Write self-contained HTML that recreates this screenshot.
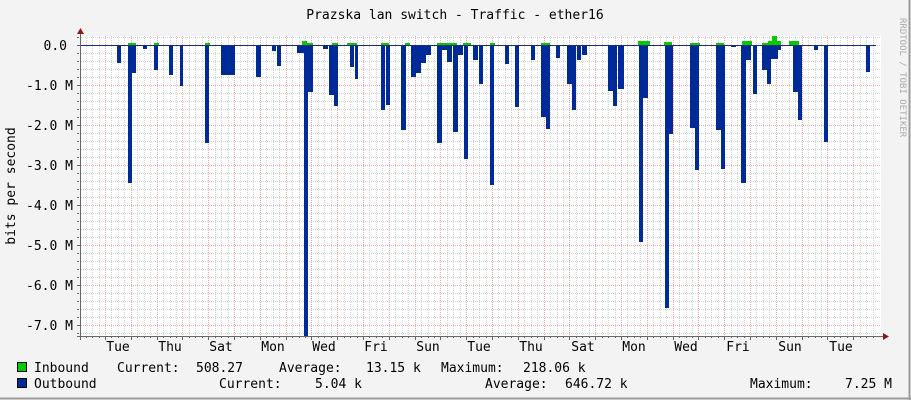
<!DOCTYPE html>
<html><head><meta charset="utf-8"><style>
html,body{margin:0;padding:0;background:#f3f3f3;}
body{width:911px;height:400px;overflow:hidden;position:relative;font-family:"DejaVu Sans Mono","Liberation Mono",monospace;}
text{white-space:pre;}
</style></head><body>
<svg id="s" width="911" height="400" xmlns="http://www.w3.org/2000/svg" style="position:absolute;left:0;top:0" font-family="DejaVu Sans Mono, Liberation Mono, monospace">
<rect x="0" y="0" width="911" height="400" fill="#f3f3f3"/>
<line x1="909.5" y1="0" x2="909.5" y2="400" stroke="#9c9c9c" stroke-width="2"/>
<line x1="0" y1="398.5" x2="911" y2="398.5" stroke="#9c9c9c" stroke-width="2"/>
<rect x="81" y="36" width="800" height="300" fill="#fff"/>
<g id="grid"></g>
<g fill="#00cc00">
<rect x="128" y="43" width="8" height="2"/><rect x="154" y="43" width="5" height="2"/><rect x="205" y="43" width="5" height="2"/>
<rect x="302" y="41" width="5" height="4"/><rect x="307" y="43" width="6" height="2"/><rect x="332" y="43" width="6" height="2"/><rect x="347" y="43" width="10" height="2"/>
<rect x="381" y="43" width="8" height="2"/><rect x="405" y="43" width="5" height="2"/><rect x="437" y="43" width="20" height="2"/><rect x="463" y="43" width="8" height="2"/><rect x="490" y="43" width="5" height="2"/>
<rect x="541" y="43" width="9" height="2"/><rect x="638" y="41" width="12" height="4"/><rect x="664" y="42" width="8" height="3"/><rect x="690" y="43" width="10" height="2"/><rect x="716" y="43" width="8" height="2"/>
<rect x="742" y="41" width="10" height="4"/><rect x="762" y="43" width="8" height="2"/><rect x="772" y="36" width="5" height="9"/><rect x="768" y="41" width="13" height="4"/><rect x="789" y="41" width="10" height="4"/>
</g>
<g fill="#002a97">
<rect x="117" y="45" width="4" height="18"/><rect x="128" y="45" width="4" height="138"/><rect x="132" y="45" width="4" height="28"/><rect x="143" y="45" width="4" height="4"/><rect x="154" y="45" width="4" height="25"/><rect x="169" y="45" width="4" height="30"/><rect x="180" y="45" width="3" height="41"/>
<rect x="205" y="45" width="4" height="98"/><rect x="221" y="45" width="14" height="30"/><rect x="225" y="45" width="5" height="28"/><rect x="256" y="45" width="5" height="32"/><rect x="272" y="45" width="4" height="6"/><rect x="277" y="45" width="4" height="21"/>
<rect x="297" y="45" width="7" height="8"/><rect x="304" y="45" width="4" height="291"/><rect x="308" y="45" width="5" height="47"/><rect x="323" y="45" width="5" height="4"/><rect x="329" y="45" width="5" height="50"/><rect x="334" y="45" width="4" height="61"/>
<rect x="350" y="45" width="4" height="22"/><rect x="355" y="45" width="3" height="34"/><rect x="381" y="45" width="4" height="65"/><rect x="386" y="45" width="4" height="60"/><rect x="401" y="45" width="5" height="85"/><rect x="411" y="45" width="5" height="32"/><rect x="416" y="45" width="5" height="28"/><rect x="421" y="45" width="5" height="18"/><rect x="426" y="45" width="5" height="10"/>
<rect x="437" y="45" width="5" height="98"/><rect x="442" y="45" width="5" height="5"/><rect x="447" y="45" width="5" height="17"/><rect x="453" y="45" width="5" height="87"/><rect x="458" y="45" width="5" height="10"/><rect x="464" y="45" width="4" height="114"/><rect x="473" y="45" width="5" height="15"/><rect x="479" y="45" width="4" height="39"/><rect x="490" y="45" width="4" height="140"/>
<rect x="505" y="45" width="4" height="19"/><rect x="515" y="45" width="4" height="62"/><rect x="531" y="45" width="4" height="15"/><rect x="541" y="45" width="5" height="72"/><rect x="546" y="45" width="4" height="84"/><rect x="556" y="45" width="4" height="13"/><rect x="567" y="45" width="5" height="39"/><rect x="572" y="45" width="4" height="65"/><rect x="577" y="45" width="4" height="15"/><rect x="582" y="45" width="5" height="10"/>
<rect x="608" y="45" width="5" height="46"/><rect x="613" y="45" width="4" height="61"/><rect x="618" y="45" width="6" height="44"/><rect x="639" y="45" width="4" height="197"/><rect x="643" y="45" width="5" height="53"/><rect x="665" y="45" width="4" height="263"/><rect x="669" y="45" width="4" height="89"/>
<rect x="690" y="45" width="5" height="83"/><rect x="695" y="45" width="4" height="125"/><rect x="716" y="45" width="5" height="85"/><rect x="721" y="45" width="4" height="124"/><rect x="731" y="45" width="5" height="2"/><rect x="741" y="45" width="5" height="138"/><rect x="746" y="45" width="5" height="15"/><rect x="753" y="45" width="4" height="49"/>
<rect x="762" y="45" width="5" height="25"/><rect x="767" y="45" width="4" height="39"/><rect x="771" y="45" width="7" height="14"/><rect x="778" y="45" width="3" height="5"/><rect x="793" y="45" width="5" height="47"/><rect x="798" y="45" width="4" height="75"/><rect x="814" y="45" width="4" height="5"/><rect x="824" y="45" width="4" height="97"/><rect x="866" y="45" width="4" height="27"/>
</g>
<line x1="81" y1="45.5" x2="876" y2="45.5" stroke="#1a2a80"/>
<line x1="80.5" y1="34" x2="80.5" y2="340" stroke="#666"/>
<line x1="77" y1="336.5" x2="883" y2="336.5" stroke="#666"/>
<polygon points="77,34 84,34 80.5,28" fill="#8b1a1a"/>
<polygon points="883,333 883,340 889,336.5" fill="#8b1a1a"/>
<g font-size="13" fill="#000" text-anchor="end">
<text x="67" y="50">0.0</text><text x="73" y="90">-1.0 M</text><text x="73" y="130">-2.0 M</text><text x="73" y="170">-3.0 M</text><text x="73" y="210">-4.0 M</text><text x="73" y="250">-5.0 M</text><text x="73" y="290">-6.0 M</text><text x="73" y="330">-7.0 M</text>
</g>
<g font-size="13" fill="#000" text-anchor="middle">
<text x="118" y="351">Tue</text><text x="170" y="351">Thu</text><text x="221" y="351">Sat</text><text x="273" y="351">Mon</text><text x="324" y="351">Wed</text><text x="376" y="351">Fri</text><text x="428" y="351">Sun</text><text x="479" y="351">Tue</text><text x="531" y="351">Thu</text><text x="583" y="351">Sat</text><text x="634" y="351">Mon</text><text x="686" y="351">Wed</text><text x="738" y="351">Fri</text><text x="790" y="351">Sun</text><text x="841" y="351">Tue</text>
<text x="455" y="19">Prazska lan switch - Traffic - ether16</text>
<text transform="translate(15,186) rotate(-90)">bits per second</text>
</g>
<text transform="translate(900,18) rotate(90)" font-size="9" fill="#aaa">RRDTOOL / TOBI OETIKER</text>
<rect x="17.5" y="362.5" width="9" height="9" fill="#00cc00" stroke="#000"/>
<rect x="17.5" y="378.5" width="9" height="9" fill="#002a97" stroke="#000"/>
<g font-size="13" fill="#000">
<text x="34" y="372">Inbound</text><text x="117" y="372">Current:</text><text x="196" y="372">508.27</text><text x="279" y="372">Average:</text><text x="366" y="372">13.15 k</text><text x="441" y="372">Maximum:</text><text x="523" y="372">218.06 k</text>
<text x="34" y="388">Outbound</text>
<text x="219" y="388">Current:</text><text x="315" y="388">5.04 k</text>
<text x="485" y="388">Average:</text><text x="565" y="388">646.72 k</text>
<text x="750" y="388">Maximum:</text><text x="845" y="388">7.25 M</text>
</g>
</svg>
<script>
(function(){
var g=document.getElementById('grid'),h='';
for(var i=-4;i<120;i++){var x=Math.round(105+i*6.45)+0.5;if(x<82||x>880)continue;
 var maj=(i%4===0);
 h+='<line x1="'+x+'" y1="36" x2="'+x+'" y2="336" stroke="'+(maj?'#f2a6a6':'#d4d4d4')+'" stroke-dasharray="1,1"/>';}
for(var y=37;y<336;y+=8){var maj=((y-45)%40===0);
 h+='<line x1="81" y1="'+(y+0.5)+'" x2="881" y2="'+(y+0.5)+'" stroke="'+(maj?'#f2a6a6':'#d4d4d4')+'" stroke-dasharray="1,1"/>';
 h+='<line x1="77" y1="'+(y+0.5)+'" x2="'+(maj?81:79)+'" y2="'+(y+0.5)+'" stroke="#666"/>';}
for(var i=-4;i<120;i++){var x=Math.round(105+i*6.45)+0.5;if(x<82||x>880)continue;
 h+='<line x1="'+x+'" y1="336" x2="'+x+'" y2="'+(i%4===0?340:338)+'" stroke="#666"/>';}
g.innerHTML=h;
})();
</script>
</body></html>
